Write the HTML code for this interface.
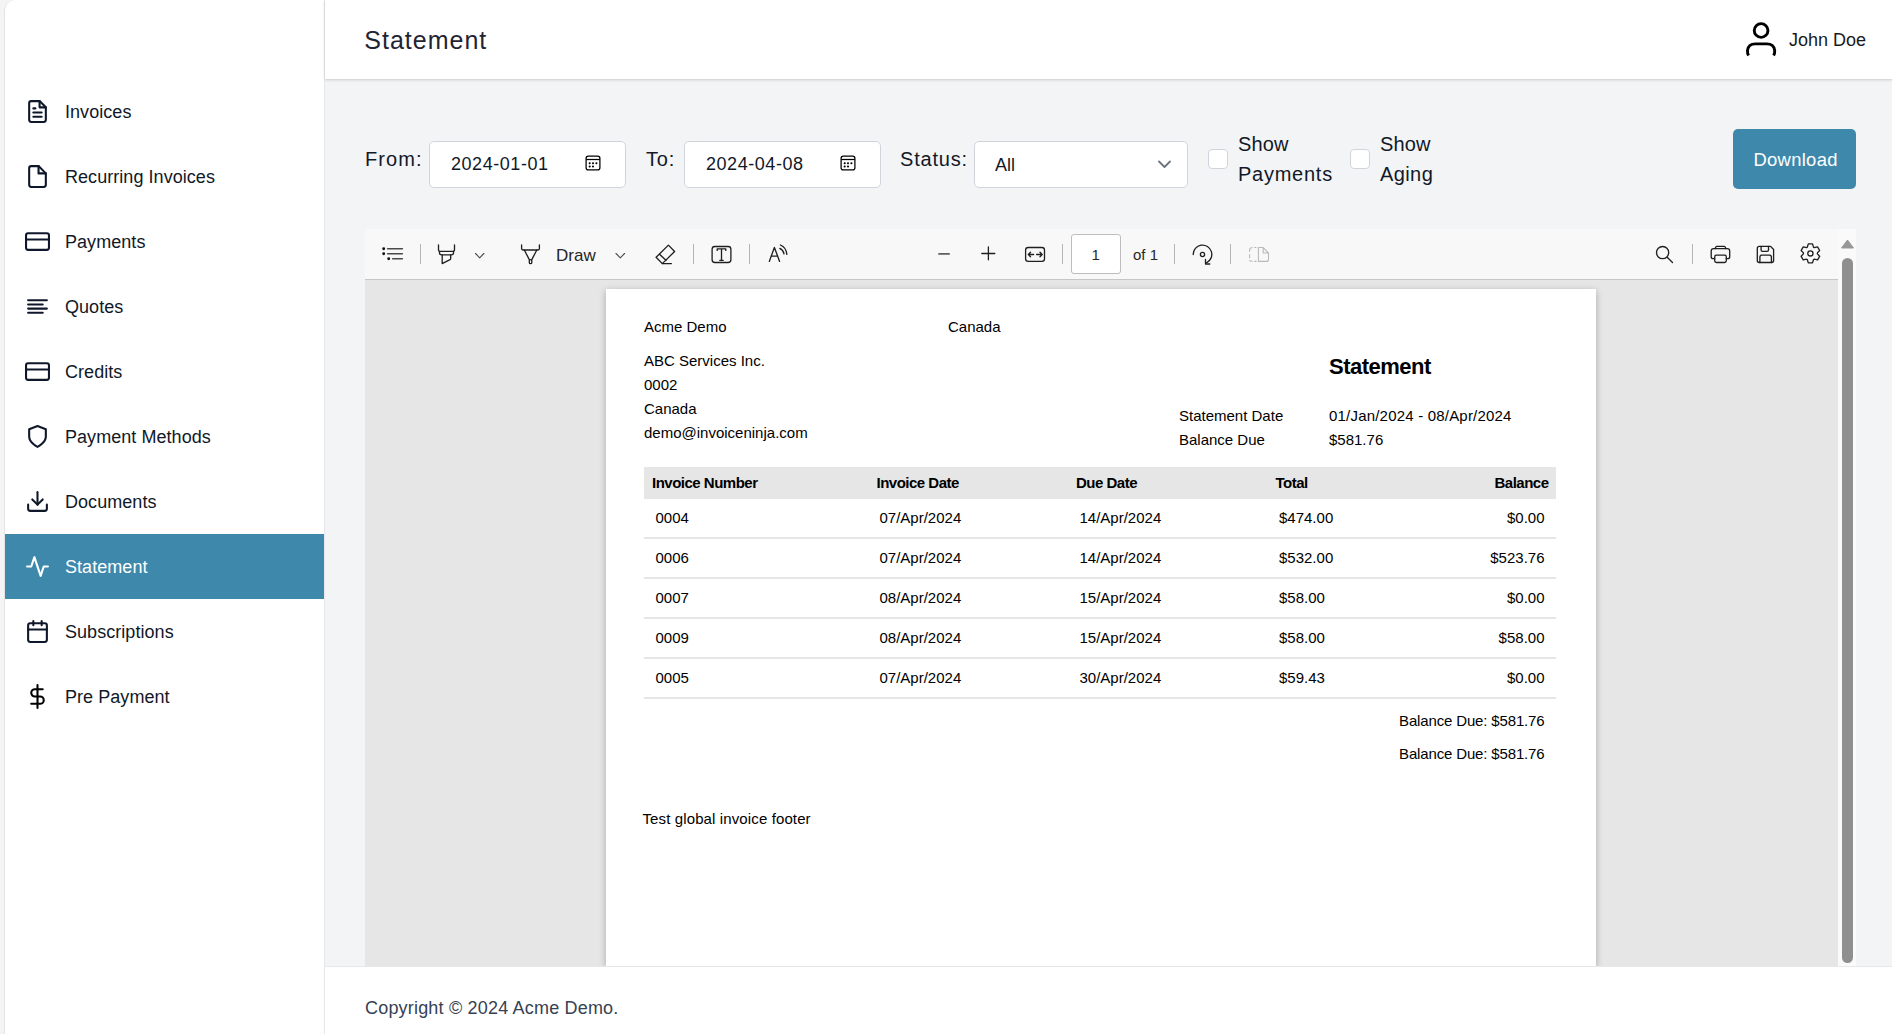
<!DOCTYPE html>
<html><head><meta charset="utf-8">
<style>

*{box-sizing:border-box;margin:0;padding:0}
html,body{width:1892px;height:1034px;overflow:hidden;background:#f3f4f6;font-family:"Liberation Sans",sans-serif;color:#111827}
.abs{position:absolute}
#strip{left:0;top:0;width:20px;height:1034px;background:#f4f4f5}
#side{left:4px;top:0;width:321px;height:1034px;background:#fff;border-left:1px solid #e4e4e7;border-right:1px solid #e5e7eb;border-top-left-radius:11px}
.nav{position:absolute;left:0;width:319px;height:65px}
.nav svg{position:absolute;left:19.5px;top:20px;width:25px;height:25px;fill:none;stroke:#0f172a;stroke-width:2;stroke-linecap:round;stroke-linejoin:round}
.nav span{position:absolute;left:60px;top:1px;line-height:65px;letter-spacing:0.05px;font-size:18px;color:#111827;white-space:nowrap}
.nav.active{background:#3e89ab}
.nav.active span{color:#fff}
.nav.active svg{stroke:#fff}
#header{left:325px;top:0;width:1567px;height:79px;background:#fff;box-shadow:0 1px 3px rgba(0,0,0,.12),0 1px 2px rgba(0,0,0,.06)}
#footer{left:325px;top:966px;width:1567px;height:68px;background:#fff;border-top:1px solid #e5e7eb}
.t{position:absolute;line-height:1;white-space:nowrap}
.inp{position:absolute;height:47px;background:#fff;border:1px solid #d1d5db;border-radius:5px}
.cal{position:absolute;width:16px;height:16px;fill:none;stroke:#000;stroke-width:1.25}
.cal .f{fill:#000;stroke:none}
.cb{position:absolute;width:20px;height:20px;background:#fff;border:1px solid #d1d5db;border-radius:4px}
.btn{position:absolute;left:1733px;top:129px;width:123px;height:60px;background:#3e89ab;border-radius:5px}
#viewer{left:365px;top:280px;width:1473px;height:686px;background:#e6e6e6;overflow:hidden}
#tb{left:365px;top:229px;width:1473px;height:51px;background:#f8f8f8;border-bottom:1px solid #c6c6c6}
#track{left:1838px;top:229px;width:18px;height:737px;background:#fafafa}
#thumb{left:1842px;top:258px;width:11px;height:705px;background:#8f8f8f;border-radius:6px}
.sep{position:absolute;width:1px;height:20px;background:#bdbdbd}
.ic{position:absolute;fill:none;stroke:#2f2f2f;stroke-width:1.2;stroke-linecap:round;stroke-linejoin:round}
#page{left:241px;top:9px;width:990px;height:677px;background:#fff;box-shadow:0 2px 7px rgba(0,0,0,.28)}
.p{color:#000}
.pb{color:#000;font-weight:bold}

</style></head><body>
<div id="strip" class="abs"></div>
<div id="side" class="abs">
  <div class="nav" style="top:79px"><svg viewBox="0 0 24 24"><path d="M14 2H6a2 2 0 0 0-2 2v16a2 2 0 0 0 2 2h12a2 2 0 0 0 2-2V8z"/><polyline points="14 2 14 8 20 8"/><line x1="16" y1="13" x2="8" y2="13"/><line x1="16" y1="17" x2="8" y2="17"/><polyline points="10 9 9 9 8 9"/></svg><span>Invoices</span></div>
  <div class="nav" style="top:144px"><svg viewBox="0 0 24 24"><path d="M13 2H6a2 2 0 0 0-2 2v16a2 2 0 0 0 2 2h12a2 2 0 0 0 2-2V9z"/><polyline points="13 2 13 9 20 9"/></svg><span>Recurring Invoices</span></div>
  <div class="nav" style="top:209px"><svg viewBox="0 0 24 24"><rect x="1" y="4" width="22" height="16" rx="2" ry="2"/><line x1="1" y1="10" x2="23" y2="10"/></svg><span>Payments</span></div>
  <div class="nav" style="top:274px"><svg viewBox="0 0 24 24"><line x1="17" y1="10" x2="3" y2="10"/><line x1="21" y1="6" x2="3" y2="6"/><line x1="21" y1="14" x2="3" y2="14"/><line x1="17" y1="18" x2="3" y2="18"/></svg><span>Quotes</span></div>
  <div class="nav" style="top:339px"><svg viewBox="0 0 24 24"><rect x="1" y="4" width="22" height="16" rx="2" ry="2"/><line x1="1" y1="10" x2="23" y2="10"/></svg><span>Credits</span></div>
  <div class="nav" style="top:404px"><svg viewBox="0 0 24 24"><path d="M12 22s8-4 8-10V5l-8-3-8 3v7c0 6 8 10 8 10z"/></svg><span>Payment Methods</span></div>
  <div class="nav" style="top:469px"><svg viewBox="0 0 24 24"><path d="M21 15v4a2 2 0 0 1-2 2H5a2 2 0 0 1-2-2v-4"/><polyline points="7 10 12 15 17 10"/><line x1="12" y1="15" x2="12" y2="3"/></svg><span>Documents</span></div>
  <div class="nav active" style="top:534px"><svg viewBox="0 0 24 24"><polyline points="22 12 18 12 15 21 9 3 6 12 2 12"/></svg><span>Statement</span></div>
  <div class="nav" style="top:599px"><svg viewBox="0 0 24 24"><rect x="3" y="4" width="18" height="18" rx="2" ry="2"/><line x1="16" y1="2" x2="16" y2="6"/><line x1="8" y1="2" x2="8" y2="6"/><line x1="3" y1="10" x2="21" y2="10"/></svg><span>Subscriptions</span></div>
  <div class="nav" style="top:664px"><svg viewBox="0 0 24 24" style="stroke:#000"><line x1="12" y1="1" x2="12" y2="23"/><path d="M17 5H9.5a3.5 3.5 0 0 0 0 7h5a3.5 3.5 0 0 1 0 7H6"/></svg><span>Pre Payment</span></div>
</div>

<div id="header" class="abs"></div><div class="t" style="left:364.3px;top:28.05px;font-size:25px;letter-spacing:1.0px;color:#1f2433">Statement</div><svg class="abs" style="left:0;top:0;width:1892px;height:79px" viewBox="0 0 1892 79" fill="none" stroke="#000" stroke-width="2.9"><circle cx="1761.1" cy="30.5" r="6.85"/><path d="M1748.6 55.6 Q1747.3 53.5 1747.5 50.5 Q1748.2 43.9 1755.5 43.9 H1766.7 Q1774 43.9 1774.7 50.5 Q1774.9 53.5 1773.6 55.6" stroke-linecap="butt"/></svg><div class="t" style="left:1789px;top:30.70px;font-size:18px;color:#1a1a1a">John Doe</div><div id="footer" class="abs"></div><div class="t" style="left:365px;top:998.70px;font-size:18px;color:#374151;letter-spacing:0.19px">Copyright © 2024 Acme Demo.</div><div class="t" style="left:365px;top:149.00px;font-size:20px;letter-spacing:1.1px">From:</div><div class="inp" style="left:429px;top:141px;width:197px"></div><div class="t" style="left:451px;top:154.70px;font-size:18px;letter-spacing:0.55px">2024-01-01</div><svg class="cal" style="left:584.9px;top:155.1px" viewBox="0 0 16 16"><rect x="1.1" y="1.1" width="13.8" height="13.8" rx="2.2"/><line x1="1.1" y1="4.5" x2="14.9" y2="4.5"/><circle cx="4.7" cy="8.3" r="1.05" class="f"/><circle cx="8" cy="8.3" r="1.05" class="f"/><circle cx="11.4" cy="8.3" r="1.05" class="f"/><circle cx="4.7" cy="11.5" r="1.05" class="f"/><circle cx="8" cy="11.5" r="1.05" class="f"/></svg><div class="t" style="left:646px;top:149.00px;font-size:20px;letter-spacing:0.8px">To:</div><div class="inp" style="left:684px;top:141px;width:197px"></div><div class="t" style="left:706px;top:154.70px;font-size:18px;letter-spacing:0.55px">2024-04-08</div><svg class="cal" style="left:839.9px;top:155.1px" viewBox="0 0 16 16"><rect x="1.1" y="1.1" width="13.8" height="13.8" rx="2.2"/><line x1="1.1" y1="4.5" x2="14.9" y2="4.5"/><circle cx="4.7" cy="8.3" r="1.05" class="f"/><circle cx="8" cy="8.3" r="1.05" class="f"/><circle cx="11.4" cy="8.3" r="1.05" class="f"/><circle cx="4.7" cy="11.5" r="1.05" class="f"/><circle cx="8" cy="11.5" r="1.05" class="f"/></svg><div class="t" style="left:900px;top:149.00px;font-size:20px;letter-spacing:0.8px">Status:</div><div class="inp" style="left:974px;top:141px;width:214px"></div><div class="t" style="left:995px;top:155.70px;font-size:18px;">All</div><svg class="abs" style="left:1155.6px;top:157.8px;width:17px;height:13px" viewBox="0 0 17 13" fill="none" stroke="#6b7280" stroke-width="1.8" stroke-linecap="round" stroke-linejoin="round"><polyline points="3 3.5 8.5 9 14 3.5"/></svg><div class="cb" style="left:1208px;top:149px"></div><div class="t" style="left:1238px;top:134.00px;font-size:20px;letter-spacing:0.1px">Show</div><div class="t" style="left:1238px;top:164.00px;font-size:20px;letter-spacing:0.75px">Payments</div><div class="cb" style="left:1350px;top:149px"></div><div class="t" style="left:1380px;top:134.00px;font-size:20px;letter-spacing:0.1px">Show</div><div class="t" style="left:1380px;top:164.00px;font-size:20px;letter-spacing:0.4px">Aging</div><div class="btn"></div><div class="t" style="left:1753.5px;top:150.56px;font-size:18.4px;color:#fff;letter-spacing:0.3px">Download</div><div id="viewer" class="abs"><div id="page" class="abs"></div></div><div id="tb" class="abs"></div><div id="track" class="abs"></div><svg class="abs" style="left:1841px;top:239px;width:13px;height:10px" viewBox="0 0 13 10"><path d="M6.5 1 L12.5 9 L0.5 9 Z" fill="#979797" stroke="#979797" stroke-width="1" stroke-linejoin="round"/></svg><div id="thumb" class="abs"></div><svg class="abs" style="left:0;top:0;width:1892px;height:300px" viewBox="0 0 1892 300"><line x1="420.5" y1="244" x2="420.5" y2="264" stroke="#b4b4b4" stroke-width="1"/><line x1="693.5" y1="244" x2="693.5" y2="264" stroke="#b4b4b4" stroke-width="1"/><line x1="749.5" y1="244" x2="749.5" y2="264" stroke="#b4b4b4" stroke-width="1"/><line x1="1062.5" y1="244" x2="1062.5" y2="264" stroke="#b4b4b4" stroke-width="1"/><line x1="1174.5" y1="244" x2="1174.5" y2="264" stroke="#b4b4b4" stroke-width="1"/><line x1="1230.5" y1="244" x2="1230.5" y2="264" stroke="#b4b4b4" stroke-width="1"/><line x1="1692.5" y1="244" x2="1692.5" y2="264" stroke="#b4b4b4" stroke-width="1"/><g fill="#111"><circle cx="383.7" cy="248.8" r="1.45"/><circle cx="383.7" cy="253.7" r="1.45"/><circle cx="388.7" cy="258.7" r="1.45"/></g><g stroke="#4a4a4a" stroke-width="1.5" stroke-linecap="round"><line x1="387.6" y1="248.8" x2="402.4" y2="248.8"/><line x1="387.6" y1="253.7" x2="402.4" y2="253.7"/><line x1="392.6" y1="258.7" x2="402.4" y2="258.7"/></g><g fill="none" stroke="#1f1f1f" stroke-width="1.32" stroke-linecap="round" stroke-linejoin="round"><path d="M438.5 245 V250 Q438.5 251.4 440 251.4 H453 Q454.5 251.4 454.5 250 V245"/><path d="M439.5 251.4 V253 Q439.5 254.8 441.5 254.8 H451.5 Q453.5 254.8 453.5 253 V251.4"/><path d="M442.2 254.8 V263.6 L450 259.7 Q450.7 259.3 450.7 258.5 V254.8"/><polyline points="475.5 253.5 479.7 257.8 483.9 253.5" stroke="#4a4a4a" stroke-width="1.1"/><polyline points="616 253.5 620.3 257.8 624.6 253.5" stroke="#4a4a4a" stroke-width="1.1"/><path d="M521.6 245 V248.6 Q521.6 250 523 250 H538 Q539.4 250 539.4 248.6 V245"/><path d="M524.3 250 L529.3 259.6 M536.8 250 L531.8 259.6"/><rect x="529.3" y="259.6" width="2.5" height="4" rx="1.2"/><path d="M668.4 245.1 L674.6 251.5 L662.3 263.6 L656.1 257.3 Z"/><path d="M659.5 254.2 L666 260.2 M662.3 263.6 H671.4"/><rect x="712.1" y="246.5" width="18.8" height="16" rx="2.8" stroke-width="1.3"/><path d="M717.2 250.4 V248.8 H725.8 V250.4 M721.5 248.8 V260.3 M719.8 260.3 H723.2"/><path d="M769.3 261.4 L774.4 247.4 L779.6 261.4 M771 256.2 H777.8"/><path d="M779.8 248.4 Q783.4 250.2 784 253.8"/><path d="M780.4 245 Q786.2 247.4 786.9 254.4"/><line x1="938.3" y1="253.9" x2="949.8" y2="253.9" stroke="#5a5a5a" stroke-width="1.7" stroke-linecap="butt"/><path d="M981.8 253.5 H994.8 M988.4 247 V259.8" stroke-width="1.3"/><rect x="1025.6" y="247.5" width="18.9" height="13.8" rx="2.6" stroke-width="1.3"/><path d="M1028.3 254.5 H1033.6 M1030.5 252.3 L1028.3 254.5 L1030.5 256.7 M1036.6 254.5 H1042.2 M1040 252.3 L1042.2 254.5 L1040 256.7" stroke-width="1.3"/><path d="M1193.2 254.5 A9.3 9.3 0 1 1 1206.5 262.8"/><path d="M1205.5 259.3 V264 H1209.8" stroke-width="1.3"/><circle cx="1202.5" cy="254.5" r="2.1"/></g><g fill="none" stroke="#b9b9b9" stroke-width="1.1"><path d="M1252.5 247.5 Q1249.6 247.5 1249.6 250.5 V251.8 M1249.6 254.3 V258.3 M1249.6 260 Q1249.6 261.4 1252.5 261.4 M1254.2 247.5 H1256.5 M1254.2 261.4 H1256.5"/><path d="M1258.4 247.5 H1263.2 L1268.5 253 V259.4 Q1268.5 261.4 1266.5 261.4 H1258.4 Z M1263.2 247.5 V253 H1268.5"/></g><g fill="none" stroke="#1f1f1f" stroke-width="1.32" stroke-linecap="round" stroke-linejoin="round"><circle cx="1662.6" cy="252.6" r="6.1"/><line x1="1667.2" y1="257.3" x2="1672.5" y2="262.5"/><path d="M1715 248.7 L1715.8 247 Q1716.2 246.4 1717 246.4 H1724 Q1724.8 246.4 1725.2 247 L1726 248.7"/><path d="M1714.7 258.7 H1713.2 Q1711.2 258.7 1711.2 256.7 V251 Q1711.2 248.7 1713.5 248.7 H1727.4 Q1729.7 248.7 1729.7 251 V256.7 Q1729.7 258.7 1727.7 258.7 H1726.3"/><rect x="1714.7" y="255.2" width="11.6" height="7.3" rx="1.8"/><path d="M1759.3 246.4 H1770.6 L1773.6 249.5 V260.5 Q1773.6 262.5 1771.6 262.5 H1759.3 Q1757.3 262.5 1757.3 260.5 V248.4 Q1757.3 246.4 1759.3 246.4 Z"/><path d="M1761.1 246.4 V250 Q1761.1 251.4 1762.5 251.4 H1767.1 Q1768.5 251.4 1768.5 250 V246.4"/><path d="M1759.9 262.5 V257.2 Q1759.9 255.2 1761.9 255.2 H1769.4 Q1771.4 255.2 1771.4 257.2 V262.5"/><path d="M1807.33 247.11 L1808.30 243.93 L1812.50 243.93 L1813.47 247.11 L1814.31 247.60 L1817.55 246.85 L1819.65 250.48 L1817.38 252.91 L1817.38 253.89 L1819.65 256.32 L1817.55 259.95 L1814.31 259.20 L1813.47 259.69 L1812.50 262.87 L1808.30 262.87 L1807.33 259.69 L1806.49 259.20 L1803.25 259.95 L1801.15 256.32 L1803.42 253.89 L1803.42 252.91 L1801.15 250.48 L1803.25 246.85 L1806.49 247.60 Z"/><circle cx="1810.4" cy="253.4" r="2.6"/></g></svg><div class="abs" style="left:1071px;top:234px;width:50px;height:40px;background:#fff;border:1px solid #bdbdbd;border-radius:3px"></div><div class="t" style="left:1091.5px;top:247.25px;font-size:15px;color:#262626">1</div><div class="t" style="left:1133px;top:247.25px;font-size:15px;color:#262626">of 1</div><div class="t" style="left:556px;top:246.55px;font-size:17px;color:#262626">Draw</div><div class="t" style="left:644px;top:319.25px;font-size:15px;color:#000">Acme Demo</div><div class="t" style="left:948px;top:319.25px;font-size:15px;color:#000">Canada</div><div class="t" style="left:644px;top:353.25px;font-size:15px;color:#000">ABC Services Inc.</div><div class="t" style="left:644px;top:377.25px;font-size:15px;color:#000">0002</div><div class="t" style="left:644px;top:401.25px;font-size:15px;color:#000">Canada</div><div class="t" style="left:644px;top:424.75px;font-size:15px;color:#000">demo@invoiceninja.com</div><div class="t" style="left:1329px;top:356.30px;font-size:22px;color:#000;font-weight:bold;letter-spacing:-0.5px">Statement</div><div class="t" style="left:1179px;top:408.25px;font-size:15px;color:#000">Statement Date</div><div class="t" style="left:1329px;top:408.25px;font-size:15px;color:#000;letter-spacing:0.2px">01/Jan/2024 - 08/Apr/2024</div><div class="t" style="left:1179px;top:432.25px;font-size:15px;color:#000">Balance Due</div><div class="t" style="left:1329px;top:432.25px;font-size:15px;color:#000">$581.76</div><div class="abs" style="left:644px;top:467px;width:912px;height:32px;background:#e6e6e6"></div><div class="t" style="left:652px;top:474.75px;font-size:15px;color:#000;font-weight:bold;letter-spacing:-0.5px">Invoice Number</div><div class="t" style="left:876.5px;top:474.75px;font-size:15px;color:#000;font-weight:bold;letter-spacing:-0.5px">Invoice Date</div><div class="t" style="left:1076px;top:474.75px;font-size:15px;color:#000;font-weight:bold;letter-spacing:-0.5px">Due Date</div><div class="t" style="left:1275.5px;top:474.75px;font-size:15px;color:#000;font-weight:bold;letter-spacing:-0.5px">Total</div><div class="t" style="right:343.5px;top:474.75px;font-size:15px;color:#000;font-weight:bold;letter-spacing:-0.5px">Balance</div><div class="t" style="left:655.5px;top:509.75px;font-size:15px;color:#000">0004</div><div class="t" style="left:879.5px;top:509.75px;font-size:15px;color:#000">07/Apr/2024</div><div class="t" style="left:1079.5px;top:509.75px;font-size:15px;color:#000">14/Apr/2024</div><div class="t" style="left:1279px;top:509.75px;font-size:15px;color:#000">$474.00</div><div class="t" style="right:347.5px;top:509.75px;font-size:15px;color:#000">$0.00</div><div class="abs" style="left:644px;top:537px;width:912px;height:2px;background:#e6e6e6"></div><div class="t" style="left:655.5px;top:549.75px;font-size:15px;color:#000">0006</div><div class="t" style="left:879.5px;top:549.75px;font-size:15px;color:#000">07/Apr/2024</div><div class="t" style="left:1079.5px;top:549.75px;font-size:15px;color:#000">14/Apr/2024</div><div class="t" style="left:1279px;top:549.75px;font-size:15px;color:#000">$532.00</div><div class="t" style="right:347.5px;top:549.75px;font-size:15px;color:#000">$523.76</div><div class="abs" style="left:644px;top:577px;width:912px;height:2px;background:#e6e6e6"></div><div class="t" style="left:655.5px;top:589.75px;font-size:15px;color:#000">0007</div><div class="t" style="left:879.5px;top:589.75px;font-size:15px;color:#000">08/Apr/2024</div><div class="t" style="left:1079.5px;top:589.75px;font-size:15px;color:#000">15/Apr/2024</div><div class="t" style="left:1279px;top:589.75px;font-size:15px;color:#000">$58.00</div><div class="t" style="right:347.5px;top:589.75px;font-size:15px;color:#000">$0.00</div><div class="abs" style="left:644px;top:617px;width:912px;height:2px;background:#e6e6e6"></div><div class="t" style="left:655.5px;top:629.75px;font-size:15px;color:#000">0009</div><div class="t" style="left:879.5px;top:629.75px;font-size:15px;color:#000">08/Apr/2024</div><div class="t" style="left:1079.5px;top:629.75px;font-size:15px;color:#000">15/Apr/2024</div><div class="t" style="left:1279px;top:629.75px;font-size:15px;color:#000">$58.00</div><div class="t" style="right:347.5px;top:629.75px;font-size:15px;color:#000">$58.00</div><div class="abs" style="left:644px;top:657px;width:912px;height:2px;background:#e6e6e6"></div><div class="t" style="left:655.5px;top:669.75px;font-size:15px;color:#000">0005</div><div class="t" style="left:879.5px;top:669.75px;font-size:15px;color:#000">07/Apr/2024</div><div class="t" style="left:1079.5px;top:669.75px;font-size:15px;color:#000">30/Apr/2024</div><div class="t" style="left:1279px;top:669.75px;font-size:15px;color:#000">$59.43</div><div class="t" style="right:347.5px;top:669.75px;font-size:15px;color:#000">$0.00</div><div class="abs" style="left:644px;top:697px;width:912px;height:2px;background:#e6e6e6"></div><div class="t" style="right:347.5px;top:713.25px;font-size:15px;color:#000;letter-spacing:-0.15px">Balance Due: $581.76</div><div class="t" style="right:347.5px;top:746.25px;font-size:15px;color:#000;letter-spacing:-0.15px">Balance Due: $581.76</div><div class="t" style="left:642.5px;top:810.75px;font-size:15px;color:#000;letter-spacing:0.12px">Test global invoice footer</div>
</body></html>
